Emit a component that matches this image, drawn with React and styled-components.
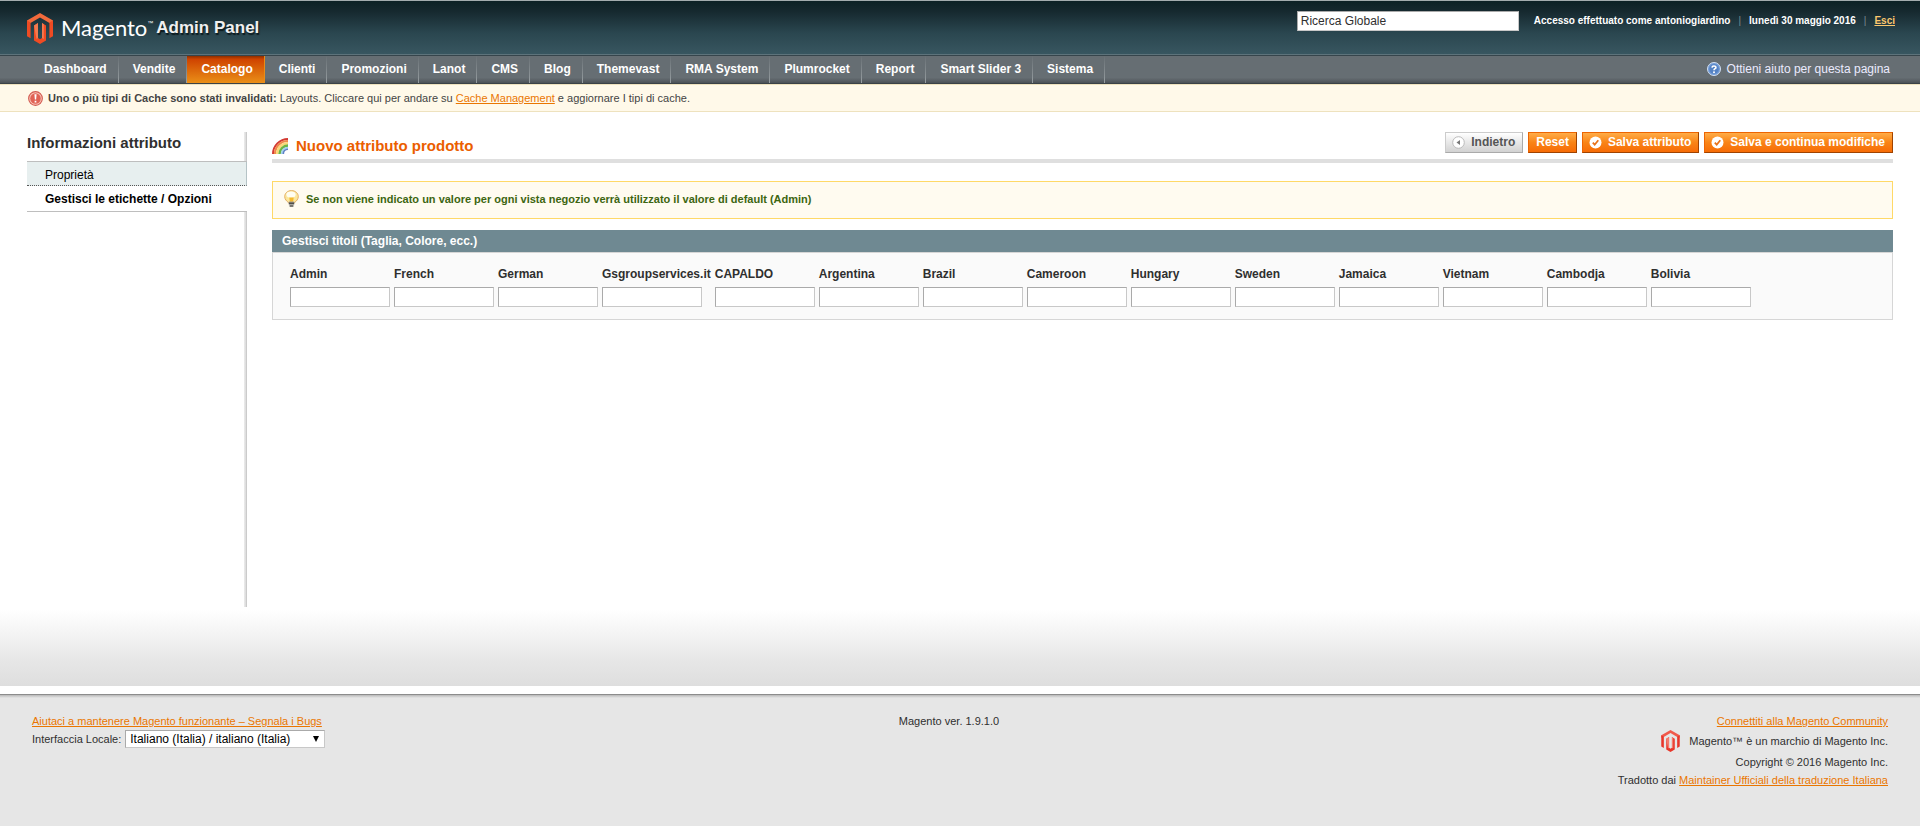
import React from "react";
import styled, { createGlobalStyle, css } from "styled-components";

const GlobalStyle = createGlobalStyle`
  *, *::before, *::after { box-sizing: border-box; }
  html { background: #e6e6e6; }
  body {
    margin: 0;
    color: #2f2f2f;
    font: 12px/18px "Liberation Sans", Arial, Helvetica, sans-serif;
  }
  input, select, button { font: inherit; margin: 0; }
`;

/* ---------- header ---------- */
const HeaderTop = styled.header`
  display: flex;
  justify-content: space-between;
  align-items: flex-start;
  height: 55px;
  padding: 10px 25px 0 27px;
  border-top: 1px solid #a3acae;
  border-bottom: 1px solid #5d737b;
  background: linear-gradient(#0c2125, #16292f 20%, #2a464f 60%, #385660);
`;

const Brand = styled.a`
  display: flex;
  align-items: center;
  height: 34px;
  color: #fff;
  text-decoration: none;
  white-space: nowrap;
`;

const BrandName = styled.span`
  margin-left: 8px;
  font: 22px/34px Lato, "Open Sans", sans-serif;
`;

const Trademark = styled.sup`
  align-self: flex-start;
  margin-top: 8px;
  font: 6px/8px "Liberation Sans", sans-serif;
`;

const BrandPanel = styled.span`
  margin-left: 3px;
  color: #f0f0f0;
  font: bold 17px/34px "Liberation Sans Narrow", "Liberation Sans", sans-serif;
  text-shadow: 1px 2px 1px #0c1a1e;
`;

const HeaderRight = styled.div`
  display: flex;
  align-items: center;
  color: #fff;
  font-size: 10px;
  font-weight: bold;
`;

const SearchInput = styled.input`
  width: 222px;
  height: 20px;
  margin-right: 15px;
  padding: 0 3px;
  border: 1px solid;
  border-color: #aaa #c8c8c8 #c8c8c8 #aaa;
  background: #fff;
  color: #2f2f2f;
  font-size: 12px;
  font-weight: normal;
`;

const Pipe = styled.span`
  margin: 0 8px;
  color: #7b8d94;
  font-weight: normal;
`;

const LogoutLink = styled.a`
  color: #fbc76d;
`;

/* ---------- navigation ---------- */
const NavBar = styled.nav`
  display: flex;
  justify-content: space-between;
  height: 29px;
  padding: 0 30px;
  border-top: 1px solid #36454c;
  border-bottom: 1px solid #3a4247;
  background: linear-gradient(#666e73 0, #666e73 80%, #555b60 94%, #4a5156);
`;

const NavList = styled.ul`
  display: flex;
  margin: 0;
  padding: 0;
  list-style: none;
`;

const NavItem = styled.li`
  border-right: 1px solid;
  border-image: linear-gradient(#666e73, #9aa1a4) 1;
  ${(p) =>
    p.$active &&
    css`
      border-image: none;
      border-color: #e98c18;
      background: linear-gradient(#8d2f00, #cf4300 12%, #db650a 50%, #ea8f18);
    `}
`;

const NavLink = styled.a`
  display: block;
  padding: 4px 11px 5px 14px;
  color: #fff;
  font-weight: bold;
  text-decoration: none;
  white-space: nowrap;
`;

const HelpLink = styled.a`
  display: flex;
  align-items: center;
  gap: 6px;
  height: 26px;
  color: #ebebff;
  text-decoration: none;
`;

/* ---------- notification strip ---------- */
const CacheNotice = styled.div`
  display: flex;
  align-items: center;
  gap: 5px;
  height: 28px;
  padding: 0 28px;
  border: solid #eee2be;
  border-width: 1px 0;
  background: #fff9e9;
  color: #444;
  font-size: 11px;
`;

const TextLink = styled.a`
  color: #ea7601;
`;

/* ---------- page body ---------- */
const Middle = styled.main`
  padding: 20px 27px 79px;
  background: linear-gradient(to top, #dedede, #e6e6e6 24px, #fff 76px);
`;

const Columns = styled.div`
  display: flex;
  gap: 25px;
  min-height: 475px;
`;

const Sidebar = styled.aside`
  flex: 0 0 220px;
  background: linear-gradient(to right, #ececec, #dcdcdc 60%, #bfbfbf) right / 3px 100% no-repeat;
`;

const SidebarTitle = styled.h3`
  margin: 0;
  padding: 1px 0 9px;
  font-size: 15px;
  line-height: 19px;
`;

const TabList = styled.ul`
  margin: 0;
  padding: 0;
  border: solid #bebebe;
  border-width: 1px 0;
  list-style: none;
`;

const TabLink = styled.a`
  display: block;
  padding: 4px 18px 1px;
  color: #000;
  text-decoration: none;
  ${(p) =>
    p.$active
      ? css`
          padding-bottom: 3px;
          background: #fff;
          font-weight: bold;
        `
      : css`
          border-right: 1px solid #b5c3c6;
          border-bottom: 1px dotted #555;
          background: #e7efef;
        `}
`;

const Content = styled.div`
  flex: 1;
  min-width: 0;
`;

const ContentHeader = styled.div`
  display: flex;
  justify-content: space-between;
  align-items: flex-start;
  margin-bottom: 18px;
  padding-bottom: 4px;
  border-bottom: 4px solid #dfdfdf;
`;

const PageTitle = styled.h1`
  display: flex;
  align-items: center;
  gap: 8px;
  margin: 0;
  padding-top: 4px;
  color: #eb5e00;
  font-size: 15px;
  line-height: 19px;
`;

const ButtonRow = styled.div`
  display: flex;
  gap: 5px;
`;

const Button = styled.button`
  display: flex;
  align-items: center;
  gap: 6px;
  height: 21px;
  padding: 0 7px 2px;
  border: 1px solid;
  border-color: #ed6502 #a04300 #a04300 #ed6502;
  background: linear-gradient(#ffac47, #f98416 50%, #f76c06);
  color: #fff;
  font-weight: bold;
  white-space: nowrap;
  ${(p) =>
    p.$back &&
    css`
      border-color: #ccc #aaa #aaa #ccc;
      background: linear-gradient(#fff, #e8e8e8 50%, #d2d2d2);
      color: #555;
    `}
  svg { margin: 2px 0 0 -1px; }
`;

const Note = styled.p`
  display: flex;
  align-items: center;
  gap: 7px;
  height: 38px;
  margin: 0 0 11px;
  padding: 0 11px 2px;
  border: 1px solid #ffd967;
  background: #fffbf0;
  color: #3d6611;
  font-size: 11px;
  font-weight: bold;
`;

const SectionHead = styled.h4`
  margin: 0;
  padding: 2px 10px;
  background: #6f8992;
  color: #fff;
  font-size: 12px;
`;

const SectionBody = styled.div`
  padding: 10px 15px;
  border: 1px solid #d6d6d6;
  background: #fafafa;
`;

const TitlesTable = styled.table`
  border-collapse: collapse;

  th, td {
    padding: 2px;
    text-align: left;
  }
  th {
    font-weight: bold;
    white-space: nowrap;
  }
`;

const TitleInput = styled.input`
  display: block;
  width: 100px;
  height: 20px;
  padding: 2px;
  border: 1px solid;
  border-color: #aaa #c8c8c8 #c8c8c8 #aaa;
  background: #fff;
`;

/* ---------- footer ---------- */
const FooterTop = styled.div`
  padding-top: 8px;
  background: #fff;
`;

const Footer = styled.footer`
  display: grid;
  grid-template-columns: 1fr auto 1fr;
  padding: 17px 32px 32px;
  border-top: 1px solid #8c8c8c;
  background: linear-gradient(#b9b9b9, #e6e6e6 3px);
  font-size: 11px;
`;

const Version = styled.div`
  padding-right: 22px;
`;

const LocaleRow = styled.div`
  display: flex;
  align-items: center;
  gap: 4px;
`;

const SelectWrap = styled.span`
  position: relative;
  display: block;

  &::after {
    position: absolute;
    top: 6px;
    right: 6px;
    border: 3px solid transparent;
    border-top: 6px solid #000;
    border-bottom: 0;
    content: "";
    pointer-events: none;
  }
`;

const LocaleSelect = styled.select`
  width: 200px;
  height: 18px;
  padding: 0 4px;
  border: 1px solid;
  border-color: #aaa #c8c8c8 #c8c8c8 #aaa;
  border-radius: 0;
  background: #fff;
  color: #000;
  font-size: 12px;
  line-height: 16px;
  appearance: none;
`;

const FooterRight = styled.div`
  text-align: right;
`;

const TrademarkRow = styled.div`
  display: flex;
  justify-content: flex-end;
  align-items: center;
  gap: 9px;
  height: 23px;
  padding-bottom: 2px;
`;

/* ---------- icons ---------- */
const MagentoMark = ({ width, height, top, side, inner }) => (
  <svg width={width} height={height} viewBox="0 0 26 31" aria-hidden="true">
    <path fill={top} d="M13 0 26 7.500V11l-3.500-1L13 4.400 3.500 10 0 11V7.500z" />
    <path fill={side} d="M0 7.500 3.600 9.600V25.200L0 23.200zM26 7.500 22.400 9.600V25.200L26 23.200z" />
    <path fill={side} d="M7 12.500 11 10V25l2 1.300 2-1.300V10l4 2.500V27.500L13 31 7 27.500z" />
    <path fill={inner} d="M7 12.500 11 10V25l-1.500 1zM15 10l1.800 1.200V26L15 25z" />
  </svg>
);

const HelpIcon = () => (
  <svg width="14" height="14" viewBox="0 0 14 14" aria-hidden="true">
    <circle cx="7" cy="7" r="6.500" fill="#6f9ad6" stroke="#d3e0f2" />
    <circle cx="7" cy="7" r="4.700" fill="#5482c4" />
    <path d="M5 5.600C5.100 3.400 9 3.500 8.900 5.600 8.800 6.800 7 6.700 7 8.300" fill="none" stroke="#fff" strokeWidth="1.600" />
    <circle cx="7" cy="10.300" r="1" fill="#fff" />
  </svg>
);

const AlertIcon = () => (
  <svg width="15" height="15" viewBox="0 0 14 14" aria-hidden="true">
    <circle cx="7" cy="7" r="6.400" fill="#f9c3b6" stroke="#d2584e" />
    <circle cx="7" cy="7" r="4.900" fill="#e06355" />
    <path d="M6 3h2l-.4 5H6.400zM6.200 9h1.600v1.700H6.200z" fill="#fff" />
  </svg>
);

const RainbowIcon = () => (
  <svg width="16" height="16" viewBox="0 0 16 16" aria-hidden="true">
    <g fill="none">
      <path d="M1 16C1 7.700 7.700 1 16 1" stroke="#d33a32" strokeWidth="2" />
      <path d="M3 16C3 8.800 8.800 3 16 3" stroke="#f0884a" strokeWidth="2.200" />
      <path d="M5.200 16C5.200 10 10 5.200 16 5.200" stroke="#f9d978" strokeWidth="2.400" />
      <path d="M7.600 16C7.600 11.400 11.400 7.600 16 7.600" stroke="#6cb545" strokeWidth="2.600" />
      <path d="M9.700 16C9.700 12.500 12.500 9.700 16 9.700" stroke="#a5d3ee" strokeWidth="2" />
      <path d="M11.300 16C11.300 13.400 13.400 11.300 16 11.300" stroke="#5d7fc4" strokeWidth="1.600" />
    </g>
  </svg>
);

const BulbIcon = () => (
  <svg width="15" height="18" viewBox="0 0 15 18" aria-hidden="true">
    <path d="M7.500.6C3.600.6.700 3.300.700 6.600c0 2.700 2 4.500 3.600 5.900h6.400c1.600-1.400 3.600-3.200 3.600-5.900C14.300 3.300 11.400.6 7.500.6z" fill="#fce79c" stroke="#e3ad62" />
    <ellipse cx="7" cy="4.600" rx="4.600" ry="3.200" fill="#fffdf0" />
    <path d="M5.300 7.500h4.400L9 12.500H6z" fill="#f5b92c" />
    <path d="M4.800 11.500h5.400v3.700H4.800z" fill="#a8a59c" />
    <path d="M4.800 13.200h5.400M5.600 16h3.800" stroke="#4f4d48" strokeWidth="1.400" />
  </svg>
);

const BackIcon = () => (
  <svg width="13" height="13" viewBox="0 0 13 13" aria-hidden="true">
    <circle cx="6.500" cy="6.500" r="5.800" fill="#fff" stroke="#bbb" />
    <path d="M8 4v5L4.500 6.500z" fill="#777" />
  </svg>
);

const CheckIcon = () => (
  <svg width="13" height="13" viewBox="0 0 13 13" aria-hidden="true">
    <circle cx="6.500" cy="6.500" r="6" fill="#fff" />
    <path d="M3.800 6.700 5.700 8.700 9.300 4.300" fill="none" stroke="#e8731a" strokeWidth="1.800" />
  </svg>
);

const NAV = [
  "Dashboard", "Vendite", "Catalogo", "Clienti", "Promozioni", "Lanot", "CMS",
  "Blog", "Themevast", "RMA System", "Plumrocket", "Report", "Smart Slider 3", "Sistema",
];

const STORES = [
  "Admin", "French", "German", "Gsgroupservices.it", "CAPALDO", "Argentina", "Brazil",
  "Cameroon", "Hungary", "Sweden", "Jamaica", "Vietnam", "Cambodja", "Bolivia",
];

export default function App() {
  return (
    <>
      <GlobalStyle />
      <HeaderTop>
        <Brand href="#">
          <MagentoMark width={26} height={31} top="#f26a3c" side="#f04b23" inner="#f47a50" />
          <BrandName>Magento</BrandName>
          <Trademark>™</Trademark>
          <BrandPanel>Admin Panel</BrandPanel>
        </Brand>
        <HeaderRight>
          <SearchInput aria-label="Ricerca Globale" defaultValue="Ricerca Globale" />
          <span>Accesso effettuato come antoniogiardino</span>
          <Pipe>|</Pipe>
          <span>lunedì 30 maggio 2016</span>
          <Pipe>|</Pipe>
          <LogoutLink href="#">Esci</LogoutLink>
        </HeaderRight>
      </HeaderTop>

      <NavBar>
        <NavList>
          {NAV.map((label) => (
            <NavItem key={label} $active={label === "Catalogo"}>
              <NavLink href="#">{label}</NavLink>
            </NavItem>
          ))}
        </NavList>
        <HelpLink href="#">
          <HelpIcon />
          Ottieni aiuto per questa pagina
        </HelpLink>
      </NavBar>

      <CacheNotice>
        <AlertIcon />
        <span>
          <strong>Uno o più tipi di Cache sono stati invalidati:</strong> Layouts. Cliccare qui per andare su{" "}
          <TextLink href="#">Cache Management</TextLink> e aggiornare I tipi di cache.
        </span>
      </CacheNotice>

      <Middle>
        <Columns>
          <Sidebar>
            <SidebarTitle>Informazioni attributo</SidebarTitle>
            <TabList>
              <li><TabLink href="#">Proprietà</TabLink></li>
              <li><TabLink href="#" $active>Gestisci le etichette / Opzioni</TabLink></li>
            </TabList>
          </Sidebar>

          <Content>
            <ContentHeader>
              <PageTitle>
                <RainbowIcon />
                Nuovo attributo prodotto
              </PageTitle>
              <ButtonRow>
                <Button type="button" $back><BackIcon />Indietro</Button>
                <Button type="button">Reset</Button>
                <Button type="button"><CheckIcon />Salva attributo</Button>
                <Button type="button"><CheckIcon />Salva e continua modifiche</Button>
              </ButtonRow>
            </ContentHeader>

            <Note>
              <BulbIcon />
              Se non viene indicato un valore per ogni vista negozio verrà utilizzato il valore di default (Admin)
            </Note>

            <SectionHead>Gestisci titoli (Taglia, Colore, ecc.)</SectionHead>
            <SectionBody>
              <TitlesTable>
                <thead>
                  <tr>
                    {STORES.map((store, i) => (
                      <th key={store} scope="col" id={`store-${i}`}>{store}</th>
                    ))}
                  </tr>
                </thead>
                <tbody>
                  <tr>
                    {STORES.map((store, i) => (
                      <td key={store}><TitleInput type="text" aria-labelledby={`store-${i}`} /></td>
                    ))}
                  </tr>
                </tbody>
              </TitlesTable>
            </SectionBody>
          </Content>
        </Columns>
      </Middle>

      <FooterTop>
        <Footer>
          <div>
            <TextLink href="#">Aiutaci a mantenere Magento funzionante – Segnala i Bugs</TextLink>
            <LocaleRow>
              <label htmlFor="locale">Interfaccia Locale:</label>
              <SelectWrap>
                <LocaleSelect id="locale">
                  <option>Italiano (Italia) / italiano (Italia)</option>
                </LocaleSelect>
              </SelectWrap>
            </LocaleRow>
          </div>
          <Version>Magento ver. 1.9.1.0</Version>
          <FooterRight>
            <TextLink href="#">Connettiti alla Magento Community</TextLink>
            <TrademarkRow>
              <MagentoMark width={19} height={22} top="#f0594b" side="#e8362a" inner="#f47a6c" />
              Magento™ è un marchio di Magento Inc.
            </TrademarkRow>
            <div>Copyright © 2016 Magento Inc.</div>
            <div>
              Tradotto dai <TextLink href="#">Maintainer Ufficiali della traduzione Italiana</TextLink>
            </div>
          </FooterRight>
        </Footer>
      </FooterTop>
    </>
  );
}
